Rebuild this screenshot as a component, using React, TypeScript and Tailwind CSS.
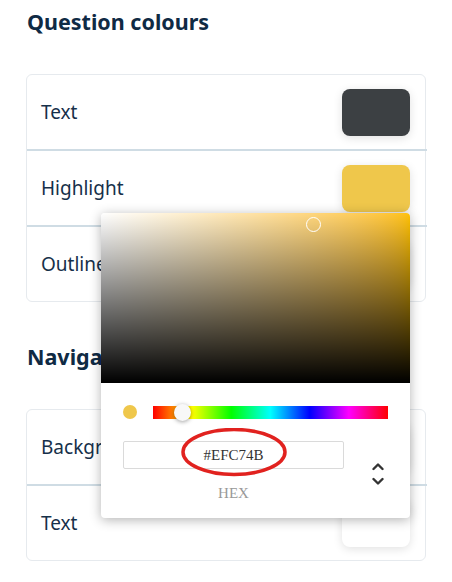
import React from 'react';

type Row = { label: string; color: string };

const questionRows: Row[] = [
    { label: 'Text', color: '#3c4043' },
    { label: 'Highlight', color: '#efc74b' },
    { label: 'Outline', color: '#ffffff' },
];

const navRows: Row[] = [
    { label: 'Background', color: '#ffffff' },
    { label: 'Text', color: '#ffffff' },
];

const ColourCard: React.FC<{ rows: Row[] }> = ({ rows }) => (
    <div className="border border-[#e6eaee] rounded-[6px] bg-white">
        {rows.map((row, i) => (
            <div
                key={row.label}
                className={`flex items-center justify-between pl-[14px] pr-[15px] ${i < rows.length - 1 ? 'h-[76px] border-b-2 border-[#cfdce4] -mr-[2px]' : 'h-[74px]'}`}
            >
                <span className="text-[19px] text-[#16304a]">{row.label}</span>
                <div
                    className={`w-[68px] h-[47px] rounded-[8px] shadow-[0_2px_10px_rgba(0,0,0,0.12)] ${i < rows.length - 1 ? 'mr-[2px]' : ''}`}
                    style={{ backgroundColor: row.color }}
                />
            </div>
        ))}
    </div>
);

const ColourPicker: React.FC = () => (
    <div className="absolute left-[101px] top-[213px] w-[309px] h-[305px] bg-white rounded-[4px] shadow-[0_2px_12px_rgba(0,0,0,0.3)]">
        <div className="relative h-[170px] rounded-t-[4px] overflow-hidden bg-linear-to-r from-white to-[#ffc100]">
            <div className="absolute inset-0 bg-linear-to-t from-black to-transparent" />
            <div className="absolute left-[205px] top-[4px] w-[15px] h-[15px] rounded-full border-[1.5px] border-white" />
        </div>
        <div className="px-[22px] pt-[22px]">
            <div className="flex items-center">
                <div className="w-[14px] h-[14px] rounded-full bg-[#efc74b]" />
                <div className="relative ml-[16px] flex-1 h-[13px] bg-[linear-gradient(to_right,#f00,#ff0,#0f0,#0ff,#00f,#f0f,#f00)]">
                    <div className="absolute left-[21px] -top-[2px] w-[17px] h-[17px] rounded-full bg-[#f8f8f8] shadow-[0_1px_4px_rgba(0,0,0,0.37)]" />
                </div>
            </div>
            <div className="flex mt-[22px]">
                <div className="w-[221px] relative">
                    <div className="h-[28px] border border-[#dadada] rounded-[2px] flex items-center justify-center font-['Liberation_Serif',serif] text-[15px] text-[#333]">
                        #EFC74B
                    </div>
                    <div className="text-center font-['Liberation_Serif',serif] text-[15px] text-[#999] mt-[16px] leading-[16px]">HEX</div>
                    <svg className="absolute left-[57px] -top-[13px]" width="110" height="50" viewBox="0 0 110 50">
                        <ellipse cx="54" cy="24" rx="51" ry="22.5" fill="none" stroke="#e1221f" strokeWidth="3.5" />
                    </svg>
                </div>
                <div className="flex-1 flex flex-col items-center pt-[21px] pl-[23px]">
                    <svg width="12" height="24" viewBox="0 0 12 24" fill="none" stroke="#333" strokeWidth="2.4" strokeLinecap="round" strokeLinejoin="round">
                        <polyline points="1.5,7 6,2.5 10.5,7" />
                        <polyline points="1.5,17 6,21.5 10.5,17" />
                    </svg>
                </div>
            </div>
        </div>
    </div>
);

export default function App() {
    return (
        <div className="relative w-[452px] h-[582px] bg-white font-['Noto_Sans','Open_Sans',sans-serif] px-[26px] overflow-hidden">
            <h2 className="pt-[8px] leading-[28px] text-[21.5px] font-bold text-[#0f2a44] pl-[1px] mb-[38px]">Question colours</h2>
            <ColourCard rows={questionRows} />
            <h2 className="mt-[41px] leading-[28px] text-[21.5px] font-bold text-[#0f2a44] pl-[1px] mb-[38px]">Navigation colours</h2>
            <ColourCard rows={navRows} />
            <ColourPicker />
        </div>
    );
}
